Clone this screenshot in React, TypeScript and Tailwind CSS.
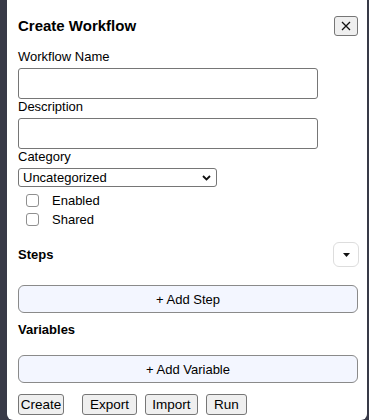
import React from "react";

const Checkbox = ({ label }: { label: string }) => {
  return (
    <div className="flex items-center h-[19px] pl-[8px]">
      <span className="w-[13px] h-[13px] border border-[#8f8f8f] rounded-[3px] bg-white" />
      <span className="ml-[13px] text-[13px] leading-[15px]">{label}</span>
    </div>
  );
};

const FooterButton = ({ label, width }: { label: string; width: string }) => {
  return (
    <button
      className={`${width} h-[21px] border border-[#767676] rounded-[3px] bg-[#efefef] text-[13.5px] leading-[15px] text-black`}
    >
      {label}
    </button>
  );
};

const App = () => {
  return (
    <div
      className="flex h-[420px] w-[370px] overflow-hidden bg-[#383a47] text-black"
      style={{ fontFamily: '"Liberation Sans", Arial, sans-serif' }}
    >
      <div className="ml-[7px] w-[360px] h-[420px] bg-white rounded-b-md pl-[11px] pr-[9px] pt-[16px]">
        {/* header */}
        <div className="flex items-center justify-between h-[20px]">
          <h2 className="text-[15px] font-bold leading-[18px]">Create Workflow</h2>
          <button className="w-[24px] h-[20px] flex items-center justify-center border border-[#767676] rounded-[3px] bg-[#efefef]">
            <svg width="10" height="10" viewBox="0 0 10 10" stroke="#111" strokeWidth="1.3">
              <path d="M1 1 L9 9 M9 1 L1 9" />
            </svg>
          </button>
        </div>

        <label className="block mt-[13px] text-[13px] leading-[16px]">Workflow Name</label>
        <div className="mt-[3px] w-[300px] h-[31px] border border-[#767676] rounded-[3px]" />

        <label className="block text-[13px] leading-[16px]">Description</label>
        <div className="mt-[3px] w-[300px] h-[31px] border border-[#767676] rounded-[3px]" />

        <label className="block text-[13px] leading-[16px]">Category</label>
        <div className="mt-[3px] w-[199px] h-[19px] border border-[#767676] rounded-[3px] flex items-center justify-between pl-[4px] pr-[5px]">
          <span className="text-[13px] leading-[15px]">Uncategorized</span>
          <svg width="9" height="6" viewBox="0 0 9 6" fill="none" stroke="#111" strokeWidth="1.8">
            <path d="M1 1 L4.5 4.5 L8 1" />
          </svg>
        </div>

        <div className="mt-[4px]">
          <Checkbox label="Enabled" />
          <Checkbox label="Shared" />
        </div>

        {/* steps */}
        <div className="mt-[13px] flex items-center justify-between h-[25px]">
          <span className="text-[13px] font-bold leading-[16px]">Steps</span>
          <button className="w-[26px] h-[25px] mr-[-1px] flex items-center justify-center border border-[#dddddd] rounded-md bg-white">
            <svg width="7" height="4" viewBox="0 0 7 4" fill="#111">
              <path d="M0 0 H7 L3.5 4 Z" />
            </svg>
          </button>
        </div>
        <button className="mt-[18px] w-full h-[28px] border border-[#8a8a8a] rounded-md bg-[#f3f6ff] text-[13px] leading-[15px]">
          + Add Step
        </button>

        {/* variables */}
        <div className="mt-[9px] text-[13px] font-bold leading-[16px]">Variables</div>
        <button className="mt-[17px] w-full h-[28px] border border-[#8a8a8a] rounded-md bg-[#f3f6ff] text-[13px] leading-[15px]">
          + Add Variable
        </button>

        <div className="mt-[11px] flex gap-[8px]">
          <FooterButton label="Create" width="w-[46px] mr-[10px]" />
          <FooterButton label="Export" width="w-[55px]" />
          <FooterButton label="Import" width="w-[53px]" />
          <FooterButton label="Run" width="w-[41px]" />
        </div>
      </div>
      <div className="w-[2px] h-full bg-[#383a47]" />
      <div className="w-[1px] h-full bg-white" />
    </div>
  );
};

export default App;
